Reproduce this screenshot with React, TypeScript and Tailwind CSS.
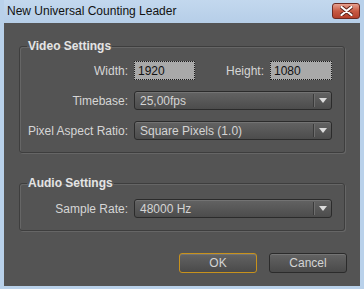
import React from "react";

const font = { fontFamily: '"Liberation Sans", Arial, sans-serif' };

const Dropdown = ({ value }: { value: string }) => {
  return (
    <div className="flex h-[19px] w-[198px] items-stretch rounded-[3px] border border-[#2b2b2b] bg-gradient-to-b from-[#636363] to-[#4c4c4c] shadow-[inset_0_1px_0_#737373]">
      <span className="flex flex-1 items-center pl-[5px] text-[12px] text-[#d4d4d4]">{value}</span>
      <span className="my-[2px] w-px bg-[#3a3a3a]" />
      <span className="my-[2px] w-px bg-[#6e6e6e]" />
      <span className="flex w-[16px] items-center justify-center">
        <svg width="8" height="5" viewBox="0 0 8 5">
          <path d="M0 0 H8 L4 5 Z" fill="#dcdcdc" />
        </svg>
      </span>
    </div>
  );
};

const Field = ({ value, w }: { value: string; w: string }) => (
  <div
    className={`flex h-[19px] ${w} items-center border border-dotted border-[#1a1a1a] bg-[#a9a9a9] pl-[3px] text-[12px] text-[#111]`}
  >
    {value}
  </div>
);

const Label = ({ children }: { children: React.ReactNode }) => (
  <span className="w-[114px] pr-[6px] text-right text-[12px] text-[#d6d6d6]">{children}</span>
);

const Group = ({ title, children }: { title: string; children: React.ReactNode }) => (
  <fieldset className="mx-[15px] rounded-[3px] border border-[#3e3e3e] shadow-[inset_1px_1px_0_#666,1px_1px_0_#666]">
    <legend className="ml-[7px] px-[1px] text-[12px] font-bold leading-[14px] text-[#e4e4e4]">{title}</legend>
    {children}
  </fieldset>
);

const Button = ({ label, active }: { label: string; active?: boolean }) => (
  <button
    type="button"
    className={`h-[20px] w-[78px] rounded-[3px] border bg-gradient-to-b from-[#636363] to-[#4a4a4a] text-[12px] text-[#d4d4d4] shadow-[inset_0_1px_0_#747474] ${
      active ? "border-[#c8921c]" : "border-[#2b2b2b]"
    }`}
  >
    {label}
  </button>
);

export default function App() {
  return (
    <div className="flex h-[289px] w-[364px] flex-col bg-[#b9d1ea] px-[4px] pb-[3px]" style={font}>
      {/* title bar */}
      <div className="flex h-[23px] items-start justify-between bg-gradient-to-b from-[#c3d8ee] to-[#b6cee8]">
        <span className="pl-[3px] pt-[4px] text-[12px] leading-[15px] text-[#111]">New Universal Counting Leader</span>
        <div className="mt-[3px] flex h-[16px] w-[28px] items-center justify-center rounded-[3px] border border-[#6d2a22] bg-gradient-to-b from-[#e6a08f] via-[#c85a44] to-[#b3402c]">
          <svg width="13" height="10" viewBox="0 0 13 10">
            <path d="M1.5 1 L11.5 9 M11.5 1 L1.5 9" stroke="#5a2018" strokeWidth="4" strokeLinecap="round" />
            <path d="M1.5 1 L11.5 9 M11.5 1 L1.5 9" stroke="#fff" strokeWidth="2.2" strokeLinecap="round" />
          </svg>
        </div>
      </div>

      {/* body */}
      <div className="flex flex-1 flex-col bg-[#545454] pt-[16px]">
        <Group title="Video Settings">
          <div className="flex flex-col gap-[11px] pt-[8px] pb-[12px]">
            <div className="flex items-center">
              <Label>Width:</Label>
              <Field value="1920" w="w-[61px]" />
              <span className="w-[75px] pr-[6px] text-right text-[12px] text-[#d6d6d6]">Height:</span>
              <Field value="1080" w="w-[62px]" />
            </div>
            <div className="flex items-center">
              <Label>Timebase:</Label>
              <Dropdown value="25,00fps" />
            </div>
            <div className="flex items-center">
              <Label>Pixel Aspect Ratio:</Label>
              <Dropdown value="Square Pixels (1.0)" />
            </div>
          </div>
        </Group>

        <div className="h-[23px]" />

        <Group title="Audio Settings">
          <div className="flex flex-col pt-[9px] pb-[12px]">
            <div className="flex items-center">
              <Label>Sample Rate:</Label>
              <Dropdown value="48000 Hz" />
            </div>
          </div>
        </Group>

        <div className="mt-[22px] flex justify-end gap-[12px] pr-[13px]">
          <Button label="OK" active />
          <Button label="Cancel" />
        </div>
      </div>
    </div>
  );
}
